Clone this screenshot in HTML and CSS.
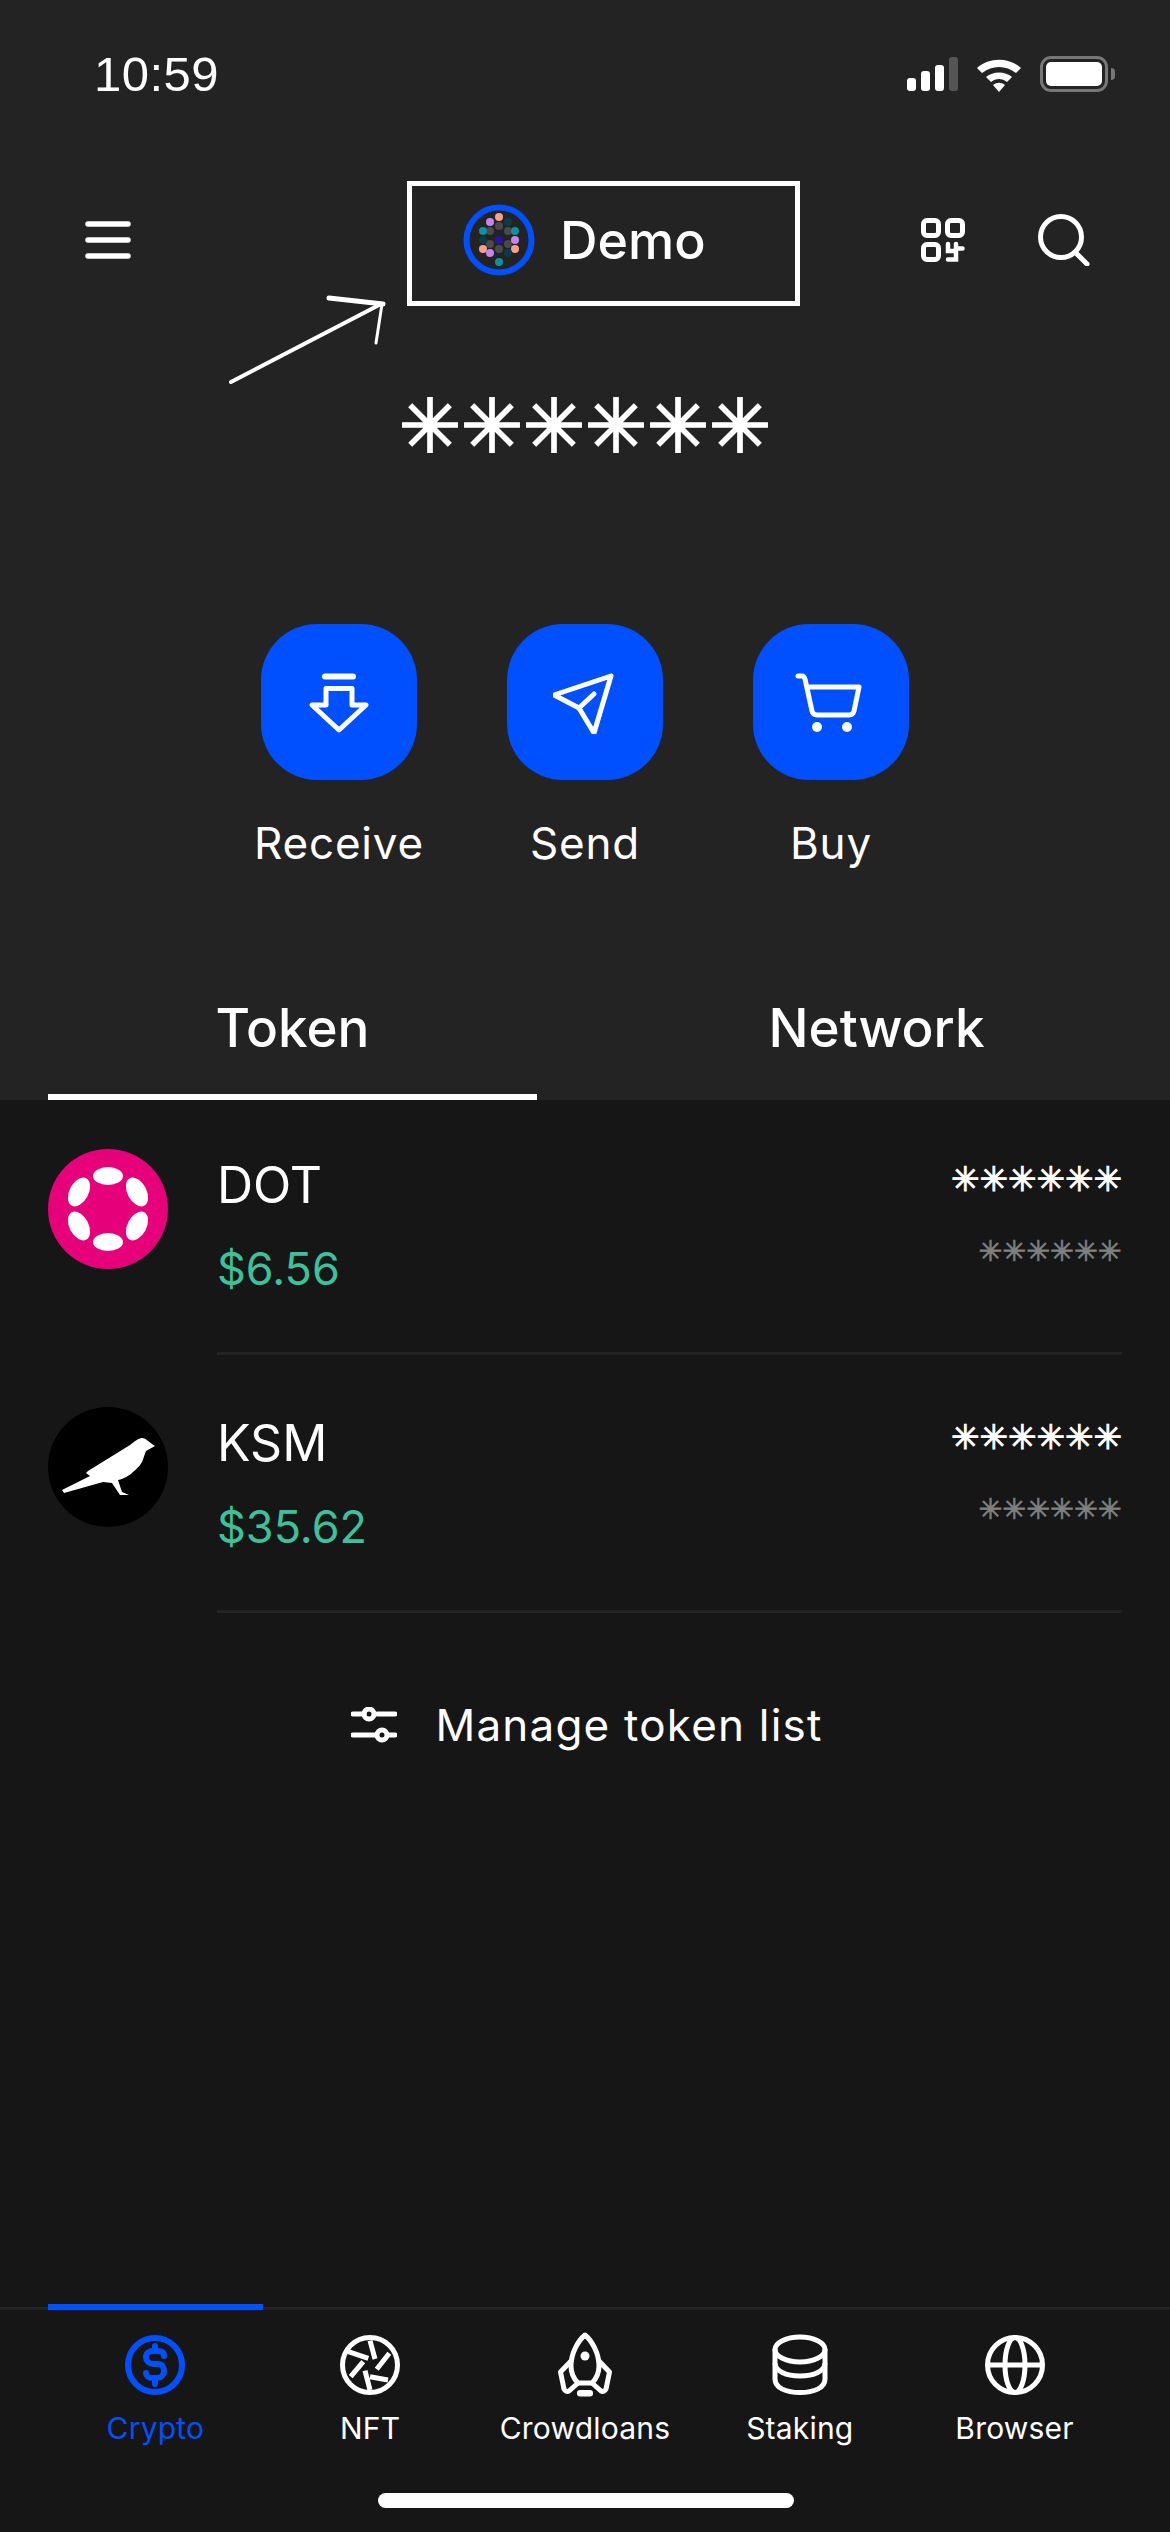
FILE: index.html
```html
<!DOCTYPE html>
<html lang="en">
<head>
    <meta charset="UTF-8">
    <meta name="viewport" content="width=device-width, initial-scale=1.0">
    <title>Wallet</title>
    <link rel="stylesheet" href="styles.css">
</head>
<body>
    <div class="top">
        <div class="status">
            <span class="time">10:59</span>
            <div class="status-icons">
                <div class="signal"><i class="b1"></i><i class="b2"></i><i class="b3"></i><i class="b4"></i></div>
                <svg class="wifi" width="48" height="36" viewBox="0 0 48 36">
                    <path d="M2 12C14 1 34 1 46 12L41 17C31 9 17 9 7 17Z" fill="#fff"/>
                    <path d="M11 21C18 15 30 15 37 21L32 26C27 22 21 22 16 26Z" fill="#fff"/>
                    <path d="M18 29C22 26 26 26 30 29L24 36Z" fill="#fff"/>
                </svg>
                <div class="battery"><div class="battery-fill"></div></div>
                <div class="battery-nub"></div>
            </div>
        </div>

        <div class="toolbar">
            <svg class="menu-icon" width="46" height="38" viewBox="0 0 46 38">
                <path d="M3 3H43M3 19H43M3 35H43" stroke="#fff" stroke-width="5.5" stroke-linecap="round"/>
            </svg>
            <div class="account">
                <svg class="account-logo" width="72" height="72" viewBox="0 0 72 72">
                    <circle cx="36" cy="36" r="32.5" fill="none" stroke="#0050ff" stroke-width="6"/>
                    <g fill="#4a4a4a">
                        <circle cx="36" cy="22" r="4"/><circle cx="27" cy="27" r="4"/><circle cx="45" cy="27" r="4"/>
                        <circle cx="27" cy="40" r="4"/><circle cx="45" cy="40" r="4"/><circle cx="36" cy="45" r="4"/>
                    </g>
                    <circle cx="36" cy="36" r="4" fill="#2a12a8"/>
                    <g fill="#f7a08a">
                        <circle cx="36" cy="13" r="4"/><circle cx="20" cy="45" r="4"/><circle cx="52" cy="45" r="4"/>
                    </g>
                    <g fill="#c684ee">
                        <circle cx="27" cy="18" r="4"/><circle cx="52" cy="36" r="4"/><circle cx="27" cy="49" r="4"/>
                    </g>
                    <g fill="#0e929c">
                        <circle cx="20" cy="27" r="4"/><circle cx="52" cy="27" r="4"/><circle cx="36" cy="58" r="4"/>
                    </g>
                    <g fill="#0b3a48">
                        <circle cx="45" cy="18" r="4"/><circle cx="20" cy="36" r="4"/><circle cx="45" cy="49" r="4"/>
                    </g>
                </svg>
                <span class="account-name">Demo</span>
            </div>
            <div class="toolbar-right">
                <svg width="44" height="44" viewBox="0 0 44 44" fill="none" stroke="#fff" stroke-width="5">
                    <rect x="2.5" y="2.5" width="15" height="15" rx="3.5"/>
                    <rect x="26.5" y="2.5" width="15" height="15" rx="3.5"/>
                    <rect x="2.5" y="26.5" width="15" height="15" rx="3.5"/>
                    <path d="M27 26V33H35M35 26V41.5H27M35 30.5H41.5" stroke-linecap="round" stroke-width="4.5"/>
                </svg>
                <svg width="52" height="52" viewBox="0 0 52 52" fill="none" stroke="#fff" stroke-width="5">
                    <circle cx="23" cy="23" r="20.5"/>
                    <path d="M37 38L49 50" stroke-linecap="round"/>
                </svg>
            </div>
            <svg class="arrow" width="160" height="90" viewBox="0 0 160 90" fill="none" stroke="#fff" stroke-linecap="round">
                <path d="M3 87L153 9" stroke-width="4"/>
                <path d="M101 3L155 9" stroke-width="5"/>
                <path d="M154 9L148 48" stroke-width="3"/>
            </svg>
        </div>

        <div class="balance">✳✳✳✳✳✳</div>

        <div class="actions">
            <div class="action">
                <div class="action-btn">
                    <svg width="64" height="64" viewBox="0 0 64 64" fill="none" stroke="#fff" stroke-width="5" stroke-linecap="round" stroke-linejoin="round">
                        <path d="M18 6.5H46" stroke-width="6"/>
                        <path d="M19 18.5H45V35H59L32 60L5 35H19Z"/>
                    </svg>
                </div>
                <span>Receive</span>
            </div>
            <div class="action">
                <div class="action-btn">
                    <svg width="64" height="64" viewBox="0 0 64 64" fill="none" stroke="#fff" stroke-width="5" stroke-linecap="round" stroke-linejoin="round">
                        <path d="M58 6L1 25L26 38L41 63Z"/>
                        <path d="M26 38L41 24"/>
                    </svg>
                </div>
                <span>Send</span>
            </div>
            <div class="action">
                <div class="action-btn">
                    <svg width="64" height="64" viewBox="0 0 64 64" fill="none" stroke="#fff" stroke-width="5" stroke-linecap="round" stroke-linejoin="round" overflow="visible">
                        <path d="M-1 6H3Q5 6 6 9L13 41Q14 45 18 45H50Q54 45 55 41L60 17H8"/>
                        <circle cx="18" cy="57" r="5" fill="#fff" stroke="none"/>
                        <circle cx="48" cy="57" r="5" fill="#fff" stroke="none"/>
                    </svg>
                </div>
                <span>Buy</span>
            </div>
        </div>

        <div class="tabs">
            <div class="tab active">Token</div>
            <div class="tab">Network</div>
        </div>
    </div>

    <div class="list">
        <div class="token">
            <svg class="token-icon" width="120" height="120" viewBox="0 0 120 120">
                <circle cx="60" cy="60" r="60" fill="#e6007a"/>
                <g fill="#fff">
                    <ellipse cx="60" cy="27" rx="15" ry="9"/>
                    <ellipse cx="60" cy="93" rx="15" ry="9"/>
                    <ellipse cx="31" cy="43" rx="15.5" ry="9.5" transform="rotate(-62 31 43)"/>
                    <ellipse cx="89" cy="43" rx="15.5" ry="9.5" transform="rotate(62 89 43)"/>
                    <ellipse cx="31" cy="77" rx="15.5" ry="9.5" transform="rotate(62 31 77)"/>
                    <ellipse cx="89" cy="77" rx="15.5" ry="9.5" transform="rotate(-62 89 77)"/>
                </g>
            </svg>
            <div class="token-body">
                <div class="token-info">
                    <div class="token-name">DOT</div>
                    <div class="token-price">$6.56</div>
                </div>
                <div class="token-hidden">
                    <div class="hidden-main">✳✳✳✳✳✳</div>
                    <div class="hidden-sub">✳✳✳✳✳✳</div>
                </div>
            </div>
        </div>
        <div class="token">
            <svg class="token-icon" width="120" height="120" viewBox="0 0 120 120">
                <circle cx="60" cy="60" r="60" fill="#000"/>
                <path d="M107 39C102 36 98 31 94 31C90 31 86 35 82 38L40 64L38 66L42 69L14 83L16 86L55 75L64 76L72 88H81L74 85L70 73C76 72 82 68 85 65C90 61 93 57 94 55C96 50 97 46 98 44Z" fill="#fff"/>
            </svg>
            <div class="token-body">
                <div class="token-info">
                    <div class="token-name">KSM</div>
                    <div class="token-price">$35.62</div>
                </div>
                <div class="token-hidden">
                    <div class="hidden-main">✳✳✳✳✳✳</div>
                    <div class="hidden-sub">✳✳✳✳✳✳</div>
                </div>
            </div>
        </div>
        <div class="manage">
            <svg width="46" height="36" viewBox="0 0 46 36" fill="none" stroke="#fff" stroke-width="5" stroke-linecap="round">
                <path d="M2 7H13M26 7H44M2 28H24M37 28H44"/>
                <circle cx="18" cy="7" r="5"/>
                <circle cx="31" cy="28" r="5"/>
            </svg>
            <span>Manage token list</span>
        </div>
    </div>

    <div class="bottom-nav">
        <div class="nav-item active">
            <svg width="64" height="66" viewBox="0 0 64 66" fill="none" stroke="#0050ff" stroke-width="6" stroke-linecap="round">
                <circle cx="32" cy="33" r="27"/>
                <path d="M41 24C41 20 38 19 35 19H30C26 19 23 21 23 25C23 29 26 32 30 32H35C39 32 41 35 41 39C41 43 38 46 34 46H29C26 46 23 44 23 41"/>
                <path d="M32 14V19M32 46V52"/>
            </svg>
            <span>Crypto</span>
        </div>
        <div class="nav-item">
            <svg width="64" height="66" viewBox="0 0 64 66" fill="none" stroke="#fff" stroke-width="5">
                <circle cx="32" cy="33" r="27.5"/>
                <path d="M32 8.7L37 27M51.3 21.3L38.7 37.3M50 48L32 44.7M32 58L27 38.7M12.7 44.7L25.3 29.7M10.3 19.7L30.3 26.3"/>
            </svg>
            <span>NFT</span>
        </div>
        <div class="nav-item">
            <svg width="64" height="66" viewBox="0 0 64 66" fill="none" stroke="#fff" stroke-width="5" stroke-linejoin="round">
                <path d="M32 3C26 8 18 20 18 34C18 41 21 47 25 51H39C43 47 46 41 46 34C46 20 38 8 32 3Z"/>
                <path d="M19 28L7.5 40L11 57C12 59 14 60 16 59L25 51M45 28L56.5 40L53 57C52 59 50 60 48 59L39 51"/>
                <circle cx="32" cy="24" r="4.5" fill="#fff" stroke="none"/>
                <rect x="24" y="58" width="16" height="6.5" rx="3" fill="#fff" stroke="none"/>
            </svg>
            <span>Crowdloans</span>
        </div>
        <div class="nav-item">
            <svg width="64" height="66" viewBox="0 0 64 66" fill="none" stroke="#fff" stroke-width="5">
                <ellipse cx="32" cy="17.5" rx="25" ry="12.5"/>
                <path d="M7 17V47C7 56 18 60.5 32 60.5C46 60.5 57 56 57 47V17"/>
                <path d="M7 31C7 39 18 44 32 44C46 44 57 39 57 31"/>
            </svg>
            <span>Staking</span>
        </div>
        <div class="nav-item">
            <svg width="64" height="66" viewBox="0 0 64 66" fill="none" stroke="#fff" stroke-width="5">
                <circle cx="32" cy="33" r="27.5"/>
                <ellipse cx="32" cy="33" rx="10" ry="27.5"/>
                <path d="M5 33H59"/>
            </svg>
            <span>Browser</span>
        </div>
    </div>
    <div class="home-bar"></div>
</body>
</html>
```

FILE: styles.css
```css
body {
    margin: 0;
    width: 1170px;
    height: 2532px;
    overflow: hidden;
    display: flex;
    flex-direction: column;
    background-color: #161616;
    color: #fff;
    font-family: 'Inter', 'Liberation Sans', sans-serif;
}
.top {
    height: 1100px;
    display: flex;
    flex-direction: column;
    background-color: #232323;
}
.status {
    display: flex;
    justify-content: space-between;
    align-items: center;
    height: 36px;
    padding: 56px 55px 0 94px;
}
.time {
    font-family: 'Liberation Sans', sans-serif;
    font-size: 49px;
    letter-spacing: 0.5px;
}
.status-icons {
    display: flex;
    align-items: center;
}
.signal {
    display: flex;
    align-items: flex-end;
    gap: 5px;
    height: 34px;
    margin-right: 17px;
}
.signal i {
    display: block;
    width: 9px;
    background-color: #fff;
    border-radius: 3px;
}
.signal .b1 { height: 13px; }
.signal .b2 { height: 20px; }
.signal .b3 { height: 26px; }
.signal .b4 { height: 34px; background-color: #555; }
.wifi {
    margin-right: 17px;
}
.battery {
    box-sizing: border-box;
    width: 68px;
    height: 36px;
    padding: 3px;
    border: 3px solid #777;
    border-radius: 11px;
}
.battery-fill {
    height: 100%;
    background-color: #fff;
    border-radius: 5px;
}
.battery-nub {
    width: 4px;
    height: 12px;
    margin-left: 3px;
    background-color: #777;
    border-radius: 0 6px 6px 0;
}
.toolbar {
    position: relative;
    display: flex;
    align-items: center;
    height: 125px;
    margin-top: 89px;
    padding: 0 80px 0 85px;
}
.menu-icon {
    margin-right: 276px;
    margin-bottom: 7px;
}
.account {
    box-sizing: border-box;
    display: flex;
    align-items: center;
    gap: 25px;
    width: 393px;
    height: 125px;
    padding: 0 0 7px 51px;
    border: 5px solid #fff;
}
.account-name {
    font-size: 52px;
    font-weight: 500;
}
.toolbar-right {
    display: flex;
    align-items: center;
    gap: 73px;
    margin-left: auto;
    margin-bottom: 7px;
}
.arrow {
    position: absolute;
    left: 228px;
    top: 114px;
}
.balance {
    margin-top: 76px;
    text-align: center;
    font-family: 'DejaVu Sans', sans-serif;
    font-size: 74px;
    line-height: 88px;
    -webkit-text-stroke: 2px #fff;
}
.actions {
    display: flex;
    justify-content: center;
    gap: 90px;
    margin-top: 154px;
}
.action {
    width: 156px;
    display: flex;
    flex-direction: column;
    align-items: center;
    font-size: 44px;
    letter-spacing: 0.8px;
}
.action-btn {
    width: 156px;
    height: 156px;
    display: flex;
    align-items: center;
    justify-content: center;
    background-color: #0050ff;
    border-radius: 56px;
    margin-bottom: 38px;
}
.action span {
    white-space: nowrap;
    line-height: 50px;
}
.tabs {
    display: flex;
    gap: 95px;
    margin-top: auto;
    padding-left: 48px;
}
.tab {
    width: 489px;
    height: 102px;
    box-sizing: border-box;
    text-align: center;
    font-size: 53px;
    line-height: 60px;
    font-weight: 500;
}
.tab.active {
    border-bottom: 6px solid #fff;
}
.list {
    flex: 1;
}
.token {
    display: flex;
    height: 258px;
    padding: 49px 48px 0;
    box-sizing: border-box;
    gap: 49px;
}
.token-icon {
    flex-shrink: 0;
}
.token-body {
    flex: 1;
    display: flex;
    justify-content: space-between;
    height: 206px;
    box-sizing: border-box;
    border-bottom: 3px solid #222;
}
.token-name {
    font-size: 50px;
    line-height: 60px;
    margin-top: 6px;
}
.token-price {
    margin-top: 27px;
    font-size: 45px;
    line-height: 54px;
    color: #3cc29a;
}
.hidden-main {
    margin-top: 6px;
    font-family: 'DejaVu Sans', sans-serif;
    font-size: 34px;
    line-height: 48px;
    text-align: right;
    -webkit-text-stroke: 1px #fff;
}
.hidden-sub {
    margin-top: 29px;
    font-family: 'DejaVu Sans', sans-serif;
    font-size: 28.5px;
    line-height: 40px;
    text-align: right;
    color: #808080;
    -webkit-text-stroke: 0.7px #808080;
}
.manage {
    display: flex;
    align-items: center;
    justify-content: center;
    gap: 38px;
    height: 60px;
    margin-top: 79px;
    padding-left: 4px;
    font-size: 44px;
    letter-spacing: 1.2px;
}
.bottom-nav {
    position: relative;
    display: grid;
    grid-template-columns: repeat(5, 1fr);
    height: 222px;
    padding: 0 48px;
    border-top: 3px solid #222;
}
.bottom-nav::before {
    content: '';
    position: absolute;
    left: 48px;
    top: -6px;
    width: 215px;
    height: 6px;
    background-color: #0050ff;
}
.nav-item {
    display: flex;
    flex-direction: column;
    align-items: center;
    padding-top: 22px;
    font-size: 30px;
    letter-spacing: 0.2px;
    gap: 12px;
}
.nav-item.active {
    color: #0050ff;
}
.home-bar {
    position: absolute;
    left: 378px;
    top: 2493px;
    width: 416px;
    height: 15px;
    background-color: #fff;
    border-radius: 8px;
}
```
